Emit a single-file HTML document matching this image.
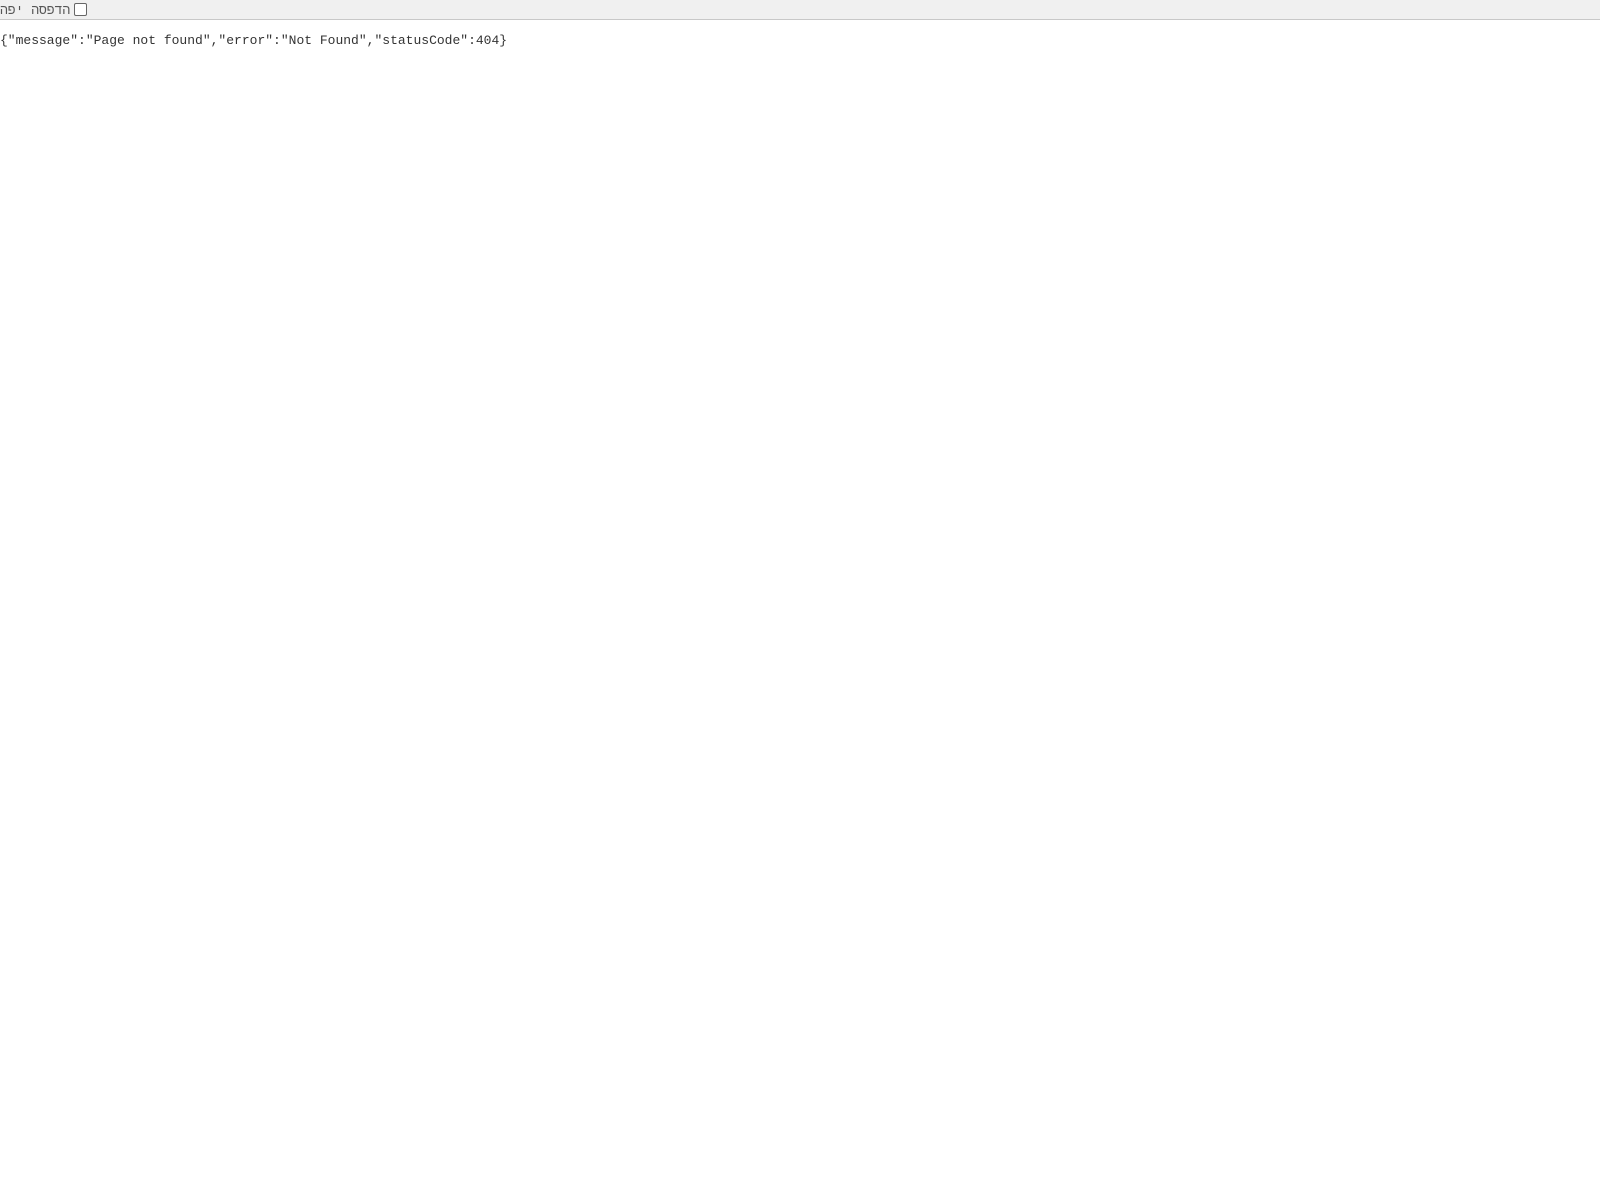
<!DOCTYPE html>
<html><head><meta charset="utf-8"><style>
html,body{margin:0;padding:0;background:#fff;width:1600px;height:1200px;overflow:hidden}
.bar{position:absolute;left:0;top:0;width:1600px;height:19px;background:#f0f0f0;border-bottom:1px solid #c8c8c8}
.lbl{position:absolute;left:0;top:3px;font:13px "Liberation Mono","DejaVu Sans Mono",monospace;color:#555;direction:rtl;white-space:nowrap}
.cb{position:absolute;left:74px;top:3px;width:11px;height:11px;border:1px solid #666;border-radius:2px;background:#fff}
pre{position:absolute;left:0;top:33px;margin:0;font:13px "Liberation Mono","DejaVu Sans Mono",monospace;color:#333;line-height:16px}
</style></head><body>
<div class="bar"><span class="lbl">הדפסה יפה</span><div class="cb"></div></div>
<pre>{"message":"Page not found","error":"Not Found","statusCode":404}</pre>
</body></html>
